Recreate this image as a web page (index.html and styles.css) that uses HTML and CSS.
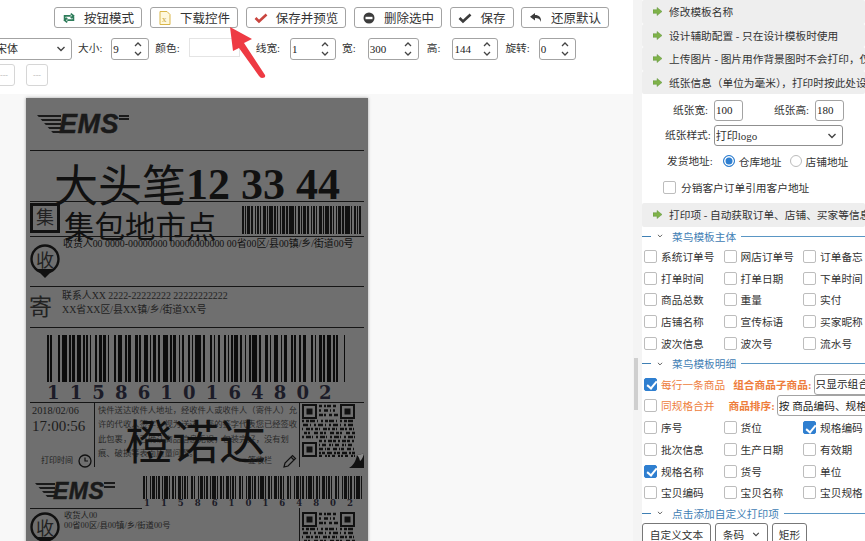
FILE: index.html
```html
<!DOCTYPE html>
<html lang="zh-CN">
<head>
<meta charset="utf-8">
<title>模板设计</title>
<link rel="stylesheet" href="styles.css">
</head>
<body>
<svg class="defs" width="0" height="0" aria-hidden="true">
  <symbol id="chev" viewBox="0 0 10 6"><path d="M1.5 1l3.5 3.5L8.5 1" fill="none" stroke="#444" stroke-width="1.4"/></symbol>
  <symbol id="spin" viewBox="0 0 10 18"><path d="M2 6l3-3 3 3M2 12l3 3 3-3" fill="none" stroke="#444" stroke-width="1.3"/></symbol>
  <symbol id="go" viewBox="0 0 10 10"><path d="M0 3h4.500V0.500L10 5l-5.500 4.500V7H0z" fill="#7fb24a" stroke="#5b8f36" stroke-width=".5"/></symbol>
  <symbol id="qr" viewBox="0 0 53 53">
    <g fill="none" stroke="#111" stroke-width="2">
      <rect x="1" y="1" width="13" height="13"/><rect x="39" y="1" width="13" height="13"/><rect x="1" y="39" width="13" height="13"/>
    </g>
    <g fill="#111"><rect x="4.500" y="4.500" width="6" height="6"/><rect x="42.500" y="4.500" width="6" height="6"/><rect x="4.500" y="42.500" width="6" height="6"/></g>
    <g stroke="#111" stroke-width="2.400" fill="none">
      <path stroke-dasharray="3 2 2 1 4 2" d="M17 2h19"/>
      <path stroke-dasharray="2 3 4 2 1 2" d="M17 6.500h19"/>
      <path stroke-dasharray="4 1 2 3 3 2" d="M17 11h19"/>
      <path stroke-dasharray="2 2 3 1 5 2 1 3" d="M0 17h53"/>
      <path stroke-dasharray="5 2 1 3 2 2" d="M1 21h52"/>
      <path stroke-dasharray="1 3 4 1 2 2 3 1" d="M0 25h53"/>
      <path stroke-dasharray="3 1 2 4 4 2" d="M2 29h51"/>
      <path stroke-dasharray="2 2 5 1 1 3" d="M0 33h53"/>
      <path stroke-dasharray="3 2 2 2 4 1" d="M17 37h36"/>
      <path stroke-dasharray="1 2 4 3 2 1" d="M17 41h36"/>
      <path stroke-dasharray="4 2 1 1 3 3" d="M17 45h36"/>
      <path stroke-dasharray="2 1 3 2 5 2" d="M17 49h36"/>
      <path stroke-dasharray="3 3 2 1 2 2" d="M17 52h36"/>
    </g>
  </symbol>
</svg>

<div class="app">
  <main class="main">
    <div class="toolbar">
      <div class="btn-row">
        <button class="tool w88"><svg class="ico" viewBox="0 0 16 12"><path d="M3 9V3.500h7M10 1l3 2.500L10 6M13 3v5.500H6M6 11L3 8.500 6 6" fill="none" stroke="#2f7d5b" stroke-width="2"/></svg>按钮模式</button>
        <button class="tool w88"><svg class="ico ico-tall" viewBox="0 0 12 14"><path d="M1 .5h7l3 3v10H1z" fill="#fff8dc" stroke="#d9b64a"/><text x="3" y="11" class="ico-x">x</text></svg>下载控件</button>
        <button class="tool w100"><svg class="ico" viewBox="0 0 14 12"><path d="M1.500 6l3.500 3.500L12.500 2.500" fill="none" stroke="#c9453f" stroke-width="2.600"/></svg>保存并预览</button>
        <button class="tool w88"><svg class="ico" viewBox="0 0 12 12"><circle cx="6" cy="6" r="5.500" fill="#3c3c3c"/><rect x="2.500" y="4.800" width="7" height="2.400" fill="#fff"/></svg>删除选中</button>
        <button class="tool w64"><svg class="ico" viewBox="0 0 14 12"><path d="M1.500 6l3.500 3.500L12.500 2.500" fill="none" stroke="#3c3c3c" stroke-width="2.600"/></svg>保存</button>
        <button class="tool w88 last"><svg class="ico" viewBox="0 0 14 12"><path d="M6 1L1 4.800 6 8.500V6c3 0 5 .8 6 4 .6-4.500-2-7-6-7z" fill="#3c3c3c"/></svg>还原默认</button>
      </div>
      <div class="prop-row">
        <select class="font-select"><option>宋体</option></select>
        <span class="prop-label l-size">大小:</span>
        <div class="num w38">9<svg class="spin"><use href="#spin"/></svg></div>
        <span class="prop-label l-color">颜色:</span>
        <div class="color-box"></div>
        <span class="prop-label l-line">线宽:</span>
        <div class="num w46">1<svg class="spin"><use href="#spin"/></svg></div>
        <span class="prop-label l-w">宽:</span>
        <div class="num w51">300<svg class="spin"><use href="#spin"/></svg></div>
        <span class="prop-label l-h">高:</span>
        <div class="num w46">144<svg class="spin"><use href="#spin"/></svg></div>
        <span class="prop-label l-r">旋转:</span>
        <div class="num w37">0<svg class="spin"><use href="#spin"/></svg></div>
      </div>
      <div class="mini-row">
        <button class="mini">---</button>
        <button class="mini">---</button>
      </div>
    </div>

    <div class="stage">
      <div class="label">
        <div class="ems ems-a"><span class="ems-lines"></span><span class="ems-word">EMS</span><span class="ems-tail"></span></div>
        <div class="rule r1"></div>
        <div class="t big1">大头笔<b>12 33 44</b></div>
        <div class="rule r2"></div>
        <div class="ji-box">集</div>
        <div class="t big2">集包地市点</div>
        <svg class="bar bar-a" viewBox="0 0 119 28"><path d="M0 14h119" stroke="#111" stroke-width="28" stroke-dasharray="2 1 1 1 3 1 2 2 1 1 2 1 1 2 3 1 1 1 4 1 2 1 1 2 1 1 3 1 2 1 5 1 1 2"/></svg>
        <div class="rule r3"></div>
        <div class="t addr1">收货人00 0000-00000000 00000000000 00省00区/县00镇/乡/街道00号</div>
        <svg class="pin pin-a" viewBox="0 0 30 34"><circle cx="15" cy="15" r="13.500" fill="none" stroke="#111" stroke-width="2.400"/><path d="M6 25h18l-9 9z" fill="#111"/></svg>
        <div class="t pin-char pc-a">收</div>
        <div class="rule r4"></div>
        <div class="t ji">寄</div>
        <div class="t s1">联系人XX 2222-22222222 22222222222</div>
        <div class="t s2">XX省XX区/县XX镇/乡/街道XX号</div>
        <div class="rule r5"></div>
        <svg class="bar bar-b" viewBox="0 0 298 47"><path d="M0 23.500h298" stroke="#0c0c0c" stroke-width="47" stroke-dasharray="2 1 2 6 2 2 5 2 2 1 3 2 4 2 2 1 2 2 1 4 2 2 3 1 3 2 1 5 2 2 4 3 2 1 3 4 3 1 2 3 4 2 1 2 3 2 2 3 5 2 2 1 3 3 1 2 2 4 2"/></svg>
        <div class="t digits-b">1158610164802</div>
        <div class="rule r6"></div>
        <div class="vline v1"></div>
        <div class="vline v2"></div>
        <div class="t date">2018/02/06</div>
        <div class="t time">17:00:56</div>
        <div class="t print-at">打印时间</div>
        <svg class="clock" viewBox="0 0 14 14"><circle cx="7" cy="7" r="6" fill="none" stroke="#111" stroke-width="1.300"/><path d="M7 3.500V7h3" fill="none" stroke="#111" stroke-width="1.200"/></svg>
        <p class="t notice">快件送达收件人地址，经收件人或收件人（寄件人）允许的代收人签字，视为送达。您的签字代表您已经签收此包裹，并已确认商品信息无误，包装完好，没有划痕、破损等表面质量问题。</p>
        <div class="t big3">橙诺达</div>
        <div class="t sign">签收栏</div>
        <svg class="pencil" viewBox="0 0 14 14"><path d="M1 13l1-4 7.500-7.500 3 3L5 12zM8 3l3 3" fill="none" stroke="#111" stroke-width="1.200"/></svg>
        <svg class="qr qr-a"><use href="#qr"/></svg>
        <svg class="curl" viewBox="0 0 15 15"><path d="M0 15C4 13 7 8 8 2c2 0 5-1 7-2v15z" fill="#111"/><path d="M8 2c2 0 5-1 7-2-.5 3-2 7-4 8-.5-2-1-4-3-6z" fill="#8a8a8a"/></svg>
        <div class="ems ems-b"><span class="ems-lines"></span><span class="ems-word">EMS</span><span class="ems-tail"></span></div>
        <svg class="bar bar-c" viewBox="0 0 220 23"><path d="M0 11.500h220" stroke="#111" stroke-width="23" stroke-dasharray="2 1 1 3 1 1 3 1 1 1 2 2 1 1 4 1 1 2 2 1 1 2 3 1 1 1 2 1 1 3"/></svg>
        <div class="t digits-c">1158610164802</div>
        <div class="rule r7"></div>
        <div class="vline v3"></div>
        <svg class="pin pin-b" viewBox="0 0 30 34"><circle cx="15" cy="15" r="13.500" fill="none" stroke="#111" stroke-width="2.400"/><path d="M6 25h18l-9 9z" fill="#111"/></svg>
        <div class="t pin-char pc-b">收</div>
        <div class="t b1">收货人00</div>
        <div class="t b2">00省00区/县00镇/乡/街道00号</div>
        <svg class="qr qr-b"><use href="#qr"/></svg>
      </div>
    </div>

    <svg class="callout" viewBox="0 0 50 60" aria-hidden="true"><path d="M5 2L27 14l-8 4L40 50q1 3-3 3-1.500 0-3-2L14 23l-6 3z" fill="#ee3a43"/></svg>
  </main>

  <div class="track"><div class="thumb"></div></div>

  <aside class="panel">
    <div class="bar-row"><svg class="go"><use href="#go"/></svg>修改模板名称</div>
    <div class="bar-row"><svg class="go"><use href="#go"/></svg>设计辅助配置 - 只在设计模板时使用</div>
    <div class="bar-row"><svg class="go"><use href="#go"/></svg>上传图片 - 图片用作背景图时不会打印，仅用于设计参考</div>
    <div class="bar-row"><svg class="go"><use href="#go"/></svg>纸张信息（单位为毫米），打印时按此处设置</div>

    <div class="paper">
      <div class="paper-row">
        <span class="p-label pl-w">纸张宽:</span><div class="p-input">100</div>
        <span class="p-label pl-h">纸张高:</span><div class="p-input">180</div>
      </div>
      <div class="paper-row">
        <span class="p-label pl-s">纸张样式:</span><select class="p-select"><option>打印logo</option></select>
      </div>
      <div class="paper-row radio-row">
        <span class="p-label pl-a">发货地址:</span>
        <label class="radio-item"><input type="radio" name="addr" checked>仓库地址</label>
        <label class="radio-item"><input type="radio" name="addr">店铺地址</label>
      </div>
      <label class="paper-check"><input type="checkbox">分销客户订单引用客户地址</label>
    </div>

    <div class="bar-row"><svg class="go"><use href="#go"/></svg>打印项 - 自动获取订单、店铺、买家等信息打印</div>

    <div class="legend"><span class="dash"></span><svg class="lchev"><use href="#chev"/></svg><span class="ltext">菜鸟模板主体</span><span class="lline"></span></div>
    <div class="checks">
      <label><input type="checkbox">系统订单号</label><label><input type="checkbox">网店订单号</label><label><input type="checkbox">订单备忘</label>
      <label><input type="checkbox">打单时间</label><label><input type="checkbox">打单日期</label><label><input type="checkbox">下单时间</label>
      <label><input type="checkbox">商品总数</label><label><input type="checkbox">重量</label><label><input type="checkbox">实付</label>
      <label><input type="checkbox">店铺名称</label><label><input type="checkbox">宣传标语</label><label><input type="checkbox">买家昵称</label>
      <label><input type="checkbox">波次信息</label><label><input type="checkbox">波次号</label><label><input type="checkbox">流水号</label>
    </div>

    <div class="legend"><span class="dash"></span><svg class="lchev"><use href="#chev"/></svg><span class="ltext">菜鸟模板明细</span><span class="lline"></span></div>
    <div class="opt-row">
      <label class="opt-check"><input type="checkbox" checked>每行一条商品</label>
      <span class="opt-label ol-a">组合商品子商品:</span>
      <select class="opt-select"><option>只显示组合商品</option></select>
    </div>
    <div class="opt-row">
      <label class="opt-check"><input type="checkbox">同规格合并</label>
      <span class="opt-label ol-b">商品排序:</span>
      <select class="opt-select"><option>按 商品编码、规格编码</option></select>
    </div>
    <div class="checks">
      <label><input type="checkbox">序号</label><label><input type="checkbox">货位</label><label><input type="checkbox" checked>规格编码</label>
      <label><input type="checkbox">批次信息</label><label><input type="checkbox">生产日期</label><label><input type="checkbox">有效期</label>
      <label><input type="checkbox" checked>规格名称</label><label><input type="checkbox">货号</label><label><input type="checkbox">单位</label>
      <label><input type="checkbox">宝贝编码</label><label><input type="checkbox">宝贝名称</label><label><input type="checkbox">宝贝规格</label>
    </div>

    <div class="legend"><span class="dash"></span><svg class="lchev"><use href="#chev"/></svg><span class="ltext">点击添加自定义打印项</span><span class="lline"></span></div>
    <div class="add-row">
      <button class="add w69">自定义文本</button>
      <button class="add w53">条码<svg class="add-chev"><use href="#chev"/></svg></button>
      <button class="add w35">矩形</button>
    </div>
  </aside>
</div>
</body>
</html>
```

FILE: styles.css
```css
* { box-sizing: border-box; }
html, body { margin: 0; height: 541px; overflow: hidden; background: #fff; }
body { font-family: "Liberation Serif", "Noto Sans CJK SC", serif; color: #333; font-size: 10.7px; }
.defs { position: absolute; }
button, select { font-family: inherit; color: inherit; }
select { appearance: none; background: #fff url("data:image/svg+xml,%3Csvg xmlns='http://www.w3.org/2000/svg' width='10' height='6'%3E%3Cpath d='M1.500 1l3.500 3.500L8.500 1' fill='none' stroke='%23444' stroke-width='1.400'/%3E%3C/svg%3E") no-repeat right 5px center; }

.app { display: flex; height: 541px; width: 865px; overflow: hidden; }
.main { width: 633px; flex: none; display: flex; flex-direction: column; position: relative; overflow: hidden; }

/* toolbar */
.toolbar { height: 94px; flex: none; background: #fff; overflow: hidden; }
.btn-row { display: flex; gap: 8px; padding: 7px 0 0 54px; }
.tool { height: 21px; padding: 0; display: flex; align-items: center; justify-content: center; gap: 8px;
  background: #fff; border: 1px solid #a3a3a3; border-radius: 3px; font-size: 12.5px; color: #333; white-space: nowrap; }
.tool.last { margin-left: -1px; }
.w88 { width: 88px; } .w100 { width: 100px; } .w64 { width: 64px; }
.ico { width: 14px; height: 12px; flex: none; }
.ico-tall { height: 14px; }
.ico-x { font-size: 9px; fill: #c9a53a; font-family: "Liberation Serif", serif; }

.prop-row { display: flex; align-items: flex-start; height: 22px; margin-top: 10px; }
.font-select { width: 78px; height: 22px; margin-left: -6px; padding-left: 1px; border: 1px solid #a3a3a3; border-radius: 3px; font-size: 11px; flex: none; }
.prop-label { font-size: 10.7px; line-height: 21px; white-space: nowrap; color: #333; }
.l-size { margin: 0 9px 0 6px; }
.l-color { margin: 0 9px 0 6px; }
.l-line { margin: 0 10px 0 16px; }
.l-w { margin: 0 12px 0 6px; }
.l-h { margin: 0 12px 0 8px; }
.l-r { margin: 0 9px 0 7px; }
.num { height: 22px; position: relative; border: 1px solid #a3a3a3; border-radius: 3px; background: #fff; font-size: 11px; line-height: 20px; padding-left: 1px; flex: none; color: #222; }
.spin { position: absolute; right: 5px; top: 1px; width: 10px; height: 18px; }
.w38 { width: 38px; } .w46 { width: 46px; } .w51 { width: 51px; } .w37 { width: 37px; }
.color-box { width: 51px; height: 19px; border: 1px solid #e4e4e4; background: #fff; flex: none; }

.mini-row { display: flex; gap: 11px; margin: 4px 0 0 -7px; }
.mini { width: 22px; height: 22px; padding: 0; border: 1px solid #d6d6d6; border-radius: 3px; background: #fff; color: #bbb; font-size: 8px; }

/* stage */
.stage { flex: 1; background: #f8f8f8; padding: 4px 0 0 26px; overflow: hidden; }
.label { position: relative; width: 342px; height: 460px; background: #6f6f6f; box-shadow: 0 0 3px rgba(0,0,0,.35); overflow: hidden; color: #111; }
.t { position: absolute; margin: 0; white-space: nowrap; line-height: 1; }
.rule { position: absolute; left: 4px; width: 334px; height: 1px; background: #151515; }
.r1 { top: 52px; } .r2 { top: 103px; } .r3 { top: 138px; } .r4 { top: 188px; } .r5 { top: 229px; } .r6 { top: 304px; }
.r7 { top: 410px; width: 112px; }
.vline { position: absolute; width: 1px; background: #151515; }
.v1 { left: 68px; top: 305px; height: 64px; }
.v2 { left: 273px; top: 305px; height: 64px; }
.v3 { left: 273px; top: 410px; height: 50px; }

.ems { position: absolute; display: flex; align-items: center; color: #1a1a1a; }
.ems-a { left: 11px; top: 16px; width: 92px; height: 21px; }
.ems-b { left: 9px; top: 384px; width: 80px; height: 18px; }
.ems-lines { width: 24px; height: 90%; flex: none; clip-path: polygon(0 0, 100% 0, 100% 100%, 70% 100%);
  background: repeating-linear-gradient(#1a1a1a 0 2px, transparent 2px 4px); }
.ems-word { font: italic 900 27px/1 "Liberation Sans", sans-serif; margin-left: -2px; letter-spacing: .5px;
  -webkit-text-stroke: .5px #1a1a1a; }
.ems-b .ems-word { font-size: 23px; }
.ems-b .ems-lines { width: 20px; }
.ems-tail { flex: 1; height: 7px; margin: -12px 0 0 0; background: repeating-linear-gradient(#1a1a1a 0 2px, transparent 2px 3.500px); }

.big1 { left: 28px; top: 60px; font-size: 44px; line-height: 50px; font-family: "Noto Sans CJK SC", sans-serif; font-weight: 400; }
.big1 b { font-family: "Liberation Serif", serif; font-weight: 700; vertical-align: 3px; }
.ji-box { position: absolute; left: 4px; top: 105px; width: 30px; height: 30px; border: 3px solid #111; text-align: center; font-size: 18px; line-height: 24px; color: #222; }
.big2 { left: 38px; top: 110px; font-size: 30.500px; line-height: 34px; font-weight: 400; font-family: "Noto Sans CJK SC", sans-serif; }
.bar { position: absolute; display: block; }
.bar-a { left: 216px; top: 108px; width: 119px; height: 28px; }
.bar-b { left: 21px; top: 237px; width: 298px; height: 47px; }
.bar-c { left: 117px; top: 378px; width: 220px; height: 23px; }
.addr1 { left: 37px; top: 140px; font-size: 9.900px; line-height: 11px; }
.pin { position: absolute; width: 30px; height: 34px; }
.pin-a { left: 4px; top: 146px; }
.pin-b { left: 4px; top: 414px; }
.pin-char { font-size: 18px; line-height: 22px; color: #222; font-family: "Noto Sans CJK SC", sans-serif; }
.pc-a { left: 10px; top: 150px; }
.pc-b { left: 10px; top: 418px; }
.ji { left: 3px; top: 194px; font-size: 23px; line-height: 26px; color: #222; font-family: "Noto Sans CJK SC", sans-serif; font-weight: 400; }
.s1 { left: 36px; top: 192px; font-size: 9.900px; line-height: 12px; color: #222; }
.s2 { left: 36px; top: 206px; font-size: 9.900px; line-height: 12px; color: #222; }
.digits-b { left: 21px; top: 285px; font-family: "DejaVu Serif", serif; font-weight: 700; font-size: 18px; line-height: 20px; letter-spacing: 10.150px; color: #1c1c28; }
.digits-c { left: 118px; top: 400px; font-family: "DejaVu Serif", serif; font-weight: 700; font-size: 8.500px; line-height: 10px; letter-spacing: 11px; color: #1c1c28; }
.date { left: 6px; top: 307px; font-size: 10.300px; line-height: 12px; color: #1c1c1c; }
.time { left: 6px; top: 319px; font-size: 15px; line-height: 18px; color: #1c1c1c; }
.print-at { left: 15px; top: 358px; font-size: 8px; line-height: 10px; color: #222; }
.clock { position: absolute; left: 52px; top: 356px; width: 14px; height: 14px; }
.notice { left: 72px; top: 306px; width: 200px; white-space: normal; font-size: 8.300px; line-height: 14.300px; color: #2a2a2a; }
.big3 { left: 99px; top: 315px; font-size: 47px; line-height: 52px; font-family: "Noto Sans CJK SC", sans-serif; font-weight: 400; }
.sign { left: 222px; top: 358px; font-size: 8px; line-height: 10px; color: #222; }
.pencil { position: absolute; left: 257px; top: 356px; width: 14px; height: 14px; }
.qr { position: absolute; width: 53px; height: 53px; }
.qr-a { left: 276px; top: 306px; }
.qr-b { left: 276px; top: 414px; }
.curl { position: absolute; left: 323px; top: 355px; width: 15px; height: 15px; }
.b1 { left: 38px; top: 413px; font-size: 8.300px; line-height: 10px; color: #222; }
.b2 { left: 38px; top: 423px; font-size: 8.300px; line-height: 10px; color: #222; }

.callout { position: absolute; left: 225px; top: 25px; width: 50px; height: 60px; }

/* scrollbar */
.track { width: 9px; flex: none; background: #f4f4f4; position: relative; }
.thumb { position: absolute; left: 1px; top: 358px; width: 4px; height: 52px; background: #cfcfcf; }

/* right panel */
.panel { width: 223px; flex: none; overflow: hidden; background: #fff; }
.bar-row { height: 23.500px; display: flex; align-items: center; padding-left: 11px; gap: 6px; background: #eee; border-radius: 2px; white-space: nowrap; font-size: 10.700px; color: #333; overflow: hidden; }
.go { width: 9px; height: 9px; flex: none; margin-right: 1px; }
.paper { height: 109px; padding-top: 6px; }
.paper-row { display: flex; align-items: center; height: 21px; margin-bottom: 4px; }
.p-label { white-space: nowrap; line-height: 21px; }
.pl-w { margin: 0 6px 0 31px; }
.pl-h { margin: 0 6px 0 31px; }
.pl-s { margin: 0 3px 0 23px; }
.pl-a { margin: 0 10px 0 25px; }
.p-input { width: 29px; height: 21px; border: 1px solid #a3a3a3; border-radius: 3px; font-size: 11px; line-height: 19px; padding-left: 1px; background: #fff; color: #222; }
.p-select { width: 129px; height: 21px; padding: 0 0 0 1px; border: 1px solid #8f8f8f; border-radius: 3px; font-size: 11px; }
.radio-row { margin-top: 6px; margin-bottom: 8px; height: 18px; }
.radio-item { display: flex; align-items: center; gap: 4px; margin-right: 8px; white-space: nowrap; }
input[type=radio] { appearance: none; width: 12px; height: 12px; margin: 0; border: 1px solid #bbb; border-radius: 50%; background: #fff; flex: none; }
input[type=radio]:checked { border: 1.500px solid #2f7fd0; box-shadow: inset 0 0 0 1.500px #fff; background: #2f7fd0; }
.paper-check { display: flex; align-items: center; gap: 5px; height: 18px; margin-left: 21px; white-space: nowrap; }
input[type=checkbox] { appearance: none; width: 13px; height: 13px; margin: 0; border: 1px solid #bdbdbd; border-radius: 2px; background: #fff; flex: none; position: relative; }
input[type=checkbox]:checked { background: #2f7fd0; border-color: #2f7fd0; }
input[type=checkbox]:checked::after { content: ""; position: absolute; left: 3.500px; top: .5px; width: 4px; height: 8px; border: solid #fff; border-width: 0 2px 2px 0; transform: rotate(40deg); }

.legend { height: 19px; display: flex; align-items: center; color: #3f80b4; white-space: nowrap; }
.dash { width: 9px; height: 1px; background: #3f80b4; flex: none; }
.lchev { width: 6px; height: 4px; margin: 0 9px 0 6px; flex: none; }
.ltext { font-size: 10.700px; margin-right: 5px; }
.lline { flex: 1; height: 1px; background: #5a96c4; }

.checks { display: grid; grid-template-columns: 79.500px 79.500px 1fr; grid-auto-rows: 21.750px; padding-left: 2px; }
.checks label { display: flex; align-items: center; gap: 4px; white-space: nowrap; }
.opt-row { display: flex; align-items: center; height: 21.750px; padding-left: 2px; white-space: nowrap; color: #ee7d3b; }
.opt-check { display: flex; align-items: center; gap: 4px; flex: none; }
.opt-label { font-weight: 700; flex: none; }
.ol-a { margin-left: 8px; }
.ol-b { margin-left: 14px; }
.opt-select { width: 120px; flex: none; height: 21px; padding: 0 0 0 1px; margin-left: 2px; border: 1px solid #a3a3a3; border-radius: 3px; color: #222; font-size: 10.700px; }

.add-row { display: flex; gap: 4px; }
.add { height: 24px; padding: 0; background: #fff; border: 1px solid #777; border-radius: 3px; font-size: 10.700px; color: #333; display: flex; align-items: center; justify-content: center; gap: 8px; }
.w69 { width: 69px; } .w53 { width: 53px; } .w35 { width: 35px; }
.add-chev { width: 8px; height: 5px; }
```
